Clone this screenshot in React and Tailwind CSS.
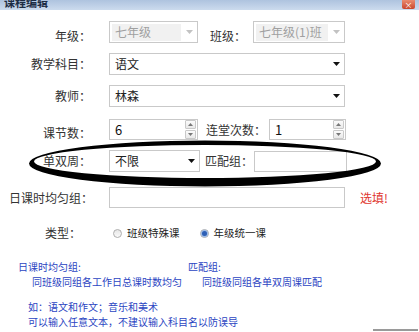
import React from 'react';

const Arrow = ({ color = '#111' }) => (
  <svg width="7" height="4" viewBox="0 0 7 4">
    <path d="M0 0 L7 0 L3.5 4 Z" fill={color} />
  </svg>
);

const Label = ({ children, className = '' }) => (
  <div className={`text-[12px] leading-none whitespace-nowrap ${className}`}>{children}</div>
);

const Select = ({ value, width, disabled }) => (
  <div className={`${width} h-[22px] border border-[#c9c9c9] bg-white flex items-center`}>
    {disabled ? (
      <div className="flex-1 h-[17px] ml-[2px] bg-[#f1f1f1] flex items-center pl-[3px] text-[12px] text-[#a0a0a0]">
        {value}
      </div>
    ) : (
      <div className="flex-1 pl-[5px] text-[12px] text-[#222]">{value}</div>
    )}
    <div className="w-[16px] flex justify-center">
      <Arrow color={disabled ? '#c2c2c2' : '#111'} />
    </div>
  </div>
);

const SpinBtn = ({ up }) => (
  <div className="w-[11px] h-[9px] border border-[#c9c9c9] rounded-[1px] bg-gradient-to-b from-[#fbfbfb] to-[#e9e9e9] flex items-center justify-center">
    <svg width="5" height="3" viewBox="0 0 5 3">
      <path d={up ? 'M0 3 L5 3 L2.5 0 Z' : 'M0 0 L5 0 L2.5 3 Z'} fill="#777" />
    </svg>
  </div>
);

const Spinner = ({ value, width }) => (
  <div className={`${width} h-[21px] border border-[#c9c9c9] bg-white flex items-center`}>
    <div className="flex-1 pl-[5px] text-[13px] text-[#111]">{value}</div>
    <div className="flex flex-col gap-[1px] mr-[1px]">
      <SpinBtn up />
      <SpinBtn />
    </div>
  </div>
);

const Input = ({ width }) => <div className={`${width} h-[21px] border border-[#c9c9c9] bg-white`} />;

const Radio = ({ checked }) => (
  <div className="w-[9px] h-[9px] rounded-full border border-[#aeaeae] bg-gradient-to-b from-[#e6e6e6] to-[#fafafa] flex items-center justify-center">
    {checked && <div className="w-[5px] h-[5px] rounded-full bg-[#2d5fb5] shadow-[0_0_1px_1px_#8fb2e6]" />}
  </div>
);

export default function App() {
  return (
    <div className="w-[419px] h-[332px] bg-white relative overflow-hidden font-['Noto_Sans_CJK_SC',sans-serif] text-[#333] flex flex-col">
      {/* title bar */}
      <div className="h-[12px] bg-gradient-to-b from-[#aec3df] to-[#ccdbee] flex items-start justify-between overflow-hidden">
        <div className="text-[11px] leading-none -mt-[3px] ml-[4px] text-[#1d2c44] font-bold">课程编辑</div>
        <div className="w-[13px] h-[9px] mr-[4px] bg-gradient-to-b from-[#e98a6f] to-[#c9452c] rounded-b-[2px] flex items-center justify-center text-white text-[8px] leading-none">
          ×
        </div>
      </div>

      {/* row 1 */}
      <div className="flex items-center mt-[11px]">
        <Label className="w-[91px] text-right pt-[8px]">年级：</Label>
        <div className="ml-[18px]">
          <Select value="七年级" width="w-[89px]" disabled />
        </div>
        <Label className="ml-[12px] w-[43px] pt-[8px]">班级：</Label>
        <Select value="七年级(1)班" width="w-[92px]" disabled />
      </div>

      {/* row 2 */}
      <div className="flex items-center mt-[10px]">
        <Label className="w-[91px] text-right">教学科目：</Label>
        <div className="ml-[18px]">
          <Select value="语文" width="w-[236px]" />
        </div>
      </div>

      {/* row 3 */}
      <div className="flex items-center mt-[10px]">
        <Label className="w-[91px] text-right">教师：</Label>
        <div className="ml-[18px]">
          <Select value="林森" width="w-[236px]" />
        </div>
      </div>

      {/* row 4 */}
      <div className="flex items-center mt-[12px]">
        <Label className="w-[91px] text-right pt-[6px]">课节数：</Label>
        <div className="ml-[18px]">
          <Spinner value="6" width="w-[89px]" />
        </div>
        <Label className="ml-[8px] w-[63px]">连堂次数：</Label>
        <Spinner value="1" width="w-[77px]" />
      </div>

      {/* row 5 */}
      <div className="flex items-center mt-[10px]">
        <Label className="w-[91px] text-right">单双周：</Label>
        <div className="ml-[18px]">
          <Select value="不限" width="w-[91px]" />
        </div>
        <Label className="ml-[5px] w-[49px]">匹配组：</Label>
        <Input width="w-[93px]" />
      </div>

      {/* row 6 */}
      <div className="flex items-center mt-[15px]">
        <Label className="w-[93px] text-right">日课时均匀组：</Label>
        <div className="ml-[16px]">
          <Input width="w-[236px]" />
        </div>
        <div className="ml-[15px] text-[12px] text-[#e0352e]">选填!</div>
      </div>

      {/* row 7 */}
      <div className="flex items-center mt-[17px]">
        <Label className="w-[81px] text-right">类型：</Label>
        <div className="ml-[32px] flex items-center gap-[5px] text-[10.5px] text-[#222]">
          <Radio />
          <span>班级特殊课</span>
        </div>
        <div className="ml-[20px] flex items-center gap-[5px] text-[10.5px] text-[#222]">
          <Radio checked />
          <span>年级统一课</span>
        </div>
      </div>

      {/* notes */}
      <div className="mt-[18px] flex text-[10px] leading-[15px] text-[#2b45c2]">
        <div className="w-[170px] ml-[18px]">
          <div>日课时均匀组:</div>
          <div className="ml-[14px]">同班级同组各工作日总课时数均匀</div>
        </div>
        <div>
          <div>匹配组:</div>
          <div className="ml-[14px]">同班级同组各单双周课匹配</div>
        </div>
      </div>
      <div className="mt-[10px] ml-[28px] text-[10px] leading-[15px] text-[#2b45c2]">
        <div>如：语文和作文；音乐和美术</div>
        <div>可以输入任意文本，不建议输入科目名以防误导</div>
      </div>
      <div className="mt-auto flex justify-end">
        <div className="w-[45px] h-[3px] border-t-2 border-[#9a9a9a] mr-[1px]" />
      </div>

      {/* hand-drawn ellipse annotation */}
      <svg className="absolute left-0 top-0 pointer-events-none" width="419" height="332" viewBox="0 0 419 332">
        <path
          fillRule="evenodd"
          fill="#000"
          d="M29 163.5 a176 23 0 1 0 352 0 a176 23 0 1 0 -352 0 Z M34 161.5 a171 16.5 0 1 0 342 0 a171 16.5 0 1 0 -342 0 Z"
        />
      </svg>
    </div>
  );
}
